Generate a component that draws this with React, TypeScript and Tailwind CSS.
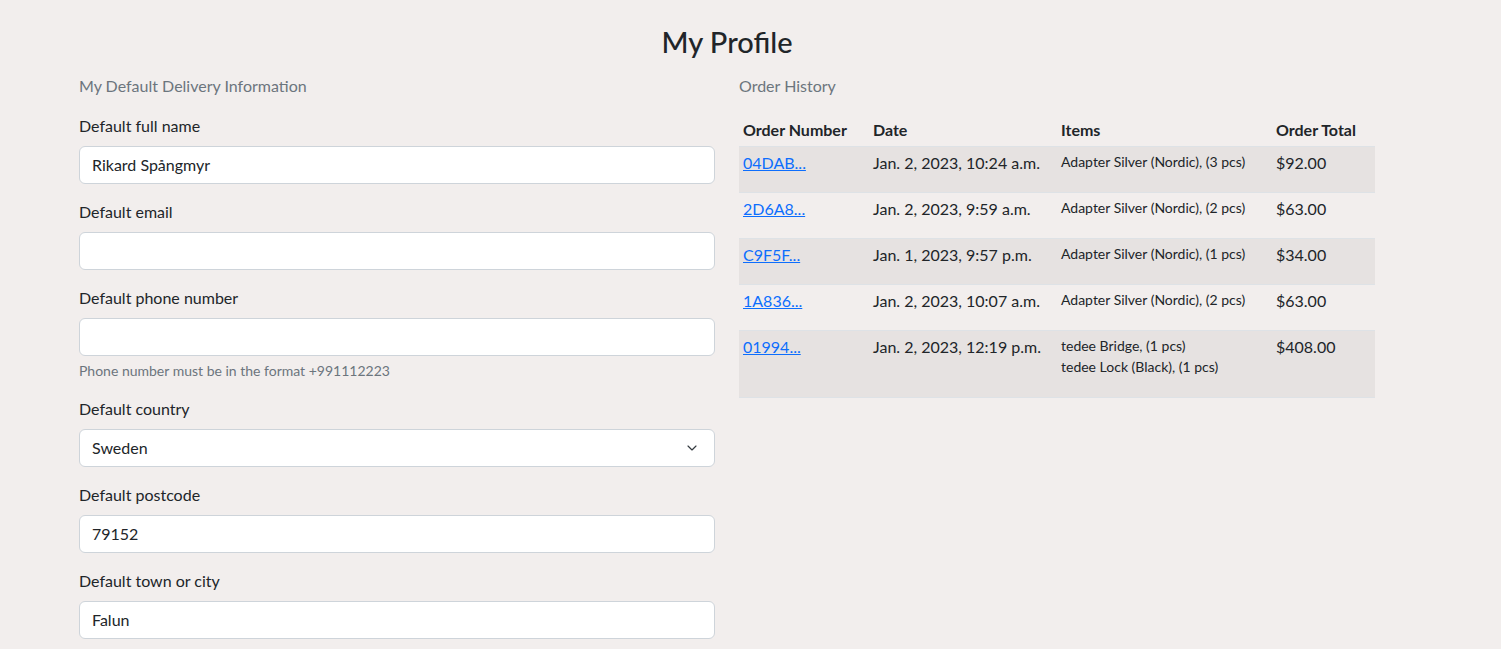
import { ChevronDown } from 'lucide-react';

const orders = [
  { id: '04DAB...', date: 'Jan. 2, 2023, 10:24 a.m.', items: ['Adapter Silver (Nordic), (3 pcs)'], total: '$92.00' },
  { id: '2D6A8...', date: 'Jan. 2, 2023, 9:59 a.m.', items: ['Adapter Silver (Nordic), (2 pcs)'], total: '$63.00' },
  { id: 'C9F5F...', date: 'Jan. 1, 2023, 9:57 p.m.', items: ['Adapter Silver (Nordic), (1 pcs)'], total: '$34.00' },
  { id: '1A836...', date: 'Jan. 2, 2023, 10:07 a.m.', items: ['Adapter Silver (Nordic), (2 pcs)'], total: '$63.00' },
  { id: '01994...', date: 'Jan. 2, 2023, 12:19 p.m.', items: ['tedee Bridge, (1 pcs)', 'tedee Lock (Black), (1 pcs)'], total: '$408.00' },
];

function Field({ label, value, help }: { label: string; value: string; help?: string }) {
  return (
    <div className="mb-4">
      <label className="block mb-2 leading-6">{label}</label>
      <div className="h-[38px] rounded-md border border-[#ced4da] bg-white px-3 flex items-center">
        {value}
      </div>
      {help && <div className="mt-1 text-sm leading-[21px] text-[#6c757d]">{help}</div>}
    </div>
  );
}

export default function App() {
  return (
    <div
      className="min-h-screen bg-[#f2eeed] text-[#212529] text-base"
      style={{ fontFamily: 'Lato, "Open Sans", sans-serif' }}
    >
      <div className="ml-[67px] w-[1320px]">
        <h2 className="text-[29px] leading-[38px] text-center font-medium pt-[23px] pb-[13px]">My Profile</h2>
        <div className="flex">
          <div className="w-[660px] px-3">
            <p className="text-[#6c757d] leading-6 mb-4">My Default Delivery Information</p>
            <Field label="Default full name" value="Rikard Spångmyr" />
            <Field label="Default email" value="" />
            <Field label="Default phone number" value="" help="Phone number must be in the format +991112223" />
            <div className="mb-4">
              <label className="block mb-2 leading-6">Default country</label>
              <div className="h-[38px] rounded-md border border-[#ced4da] bg-white pl-3 pr-[14px] flex items-center justify-between">
                <span>Sweden</span>
                <ChevronDown size={16} strokeWidth={1.75} className="text-[#343a40]" />
              </div>
            </div>
            <Field label="Default postcode" value="79152" />
            <Field label="Default town or city" value="Falun" />
          </div>
          <div className="w-[660px] px-3">
            <p className="text-[#6c757d] leading-6 mb-4">Order History</p>
            <table className="w-full border-collapse">
              <thead>
                <tr className="border-b border-[#dee2e6]">
                  <th className="text-left font-bold p-1 leading-6 w-[130px]">Order Number</th>
                  <th className="text-left font-bold p-1 leading-6 w-[188px]">Date</th>
                  <th className="text-left font-bold p-1 leading-6 w-[215px]">Items</th>
                  <th className="text-left font-bold p-1 leading-6">Order Total</th>
                </tr>
              </thead>
              <tbody>
                {orders.map((o, i) => (
                  <tr
                    key={o.id}
                    className={`border-b border-[#dee2e6] align-top ${i % 2 === 0 ? 'bg-[#e6e2e1]' : ''}`}
                  >
                    <td className="p-1 leading-6">
                      <a href="#" className="text-[#0d6efd] underline">{o.id}</a>
                    </td>
                    <td className="p-1 leading-6">{o.date}</td>
                    <td className="p-1 text-sm">
                      <div className="mb-4">
                        {o.items.map((it) => (
                          <div key={it} className="leading-[21px]">{it}</div>
                        ))}
                      </div>
                    </td>
                    <td className="p-1 leading-6">{o.total}</td>
                  </tr>
                ))}
              </tbody>
            </table>
          </div>
        </div>
      </div>
    </div>
  );
}
